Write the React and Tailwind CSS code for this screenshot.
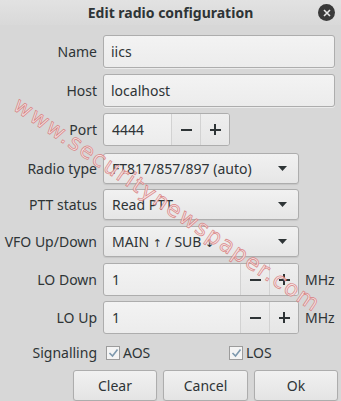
import React from "react";

const font = { fontFamily: '"Noto Sans", "DejaVu Sans", sans-serif' };

function Label({ children }) {
  return (
    <div className="w-[97px] shrink-0 text-right pr-[0px] text-[14px] text-[#2e3436] leading-none">
      {children}
    </div>
  );
}

function Entry({ value, className = "" }) {
  return (
    <div
      className={
        "h-[33px] flex items-center pl-[7px] rounded-[3px] border border-[#adadad] bg-gradient-to-b from-[#f3f3f3] to-[#ececec] shadow-[0_1px_0_rgba(255,255,255,0.5)] text-[14px] text-[#2e3436] " +
        className
      }
    >
      {value}
    </div>
  );
}

function Spin({ value, className = "" }) {
  return (
    <div
      className={
        "h-[33px] flex items-stretch rounded-[3px] border border-[#adadad] bg-gradient-to-b from-[#f3f3f3] to-[#ececec] text-[14px] text-[#2e3436] overflow-hidden " +
        className
      }
    >
      <div className="flex-1 flex items-center pl-[8px]">{value}</div>
      <div className="w-[29px] flex items-center justify-center border-l border-[#d2d2d2] bg-gradient-to-b from-[#eeeeee] to-[#e6e6e6]">
        <div className="w-[11px] h-[2px] bg-[#2e3436]" />
      </div>
      <div className="w-[29px] flex items-center justify-center border-l border-[#d2d2d2] bg-gradient-to-b from-[#eeeeee] to-[#e6e6e6] relative">
        <div className="w-[11px] h-[2px] bg-[#2e3436]" />
        <div className="absolute w-[2px] h-[11px] bg-[#2e3436]" />
      </div>
    </div>
  );
}

function Combo({ children }) {
  return (
    <div className="w-[196px] h-[31px] flex items-center justify-between pl-[8px] pr-[11px] rounded-[3px] border border-[#adadad] bg-gradient-to-b from-[#f1f1f1] to-[#e6e6e6] shadow-[0_1px_1px_rgba(0,0,0,0.08)] text-[14px] text-[#2e3436]">
      <span className="whitespace-nowrap">{children}</span>
      <svg width="9" height="5" viewBox="0 0 9 5">
        <path d="M0 0 L9 0 L4.5 5 Z" fill="#2e3436" />
      </svg>
    </div>
  );
}

function Check({ label }) {
  return (
    <div className="flex items-center">
      <div className="w-[14px] h-[14px] border border-[#9c9c9c] bg-[#f4f4f4] flex items-center justify-center">
        <svg width="11" height="10" viewBox="0 0 11 10">
          <path d="M1.5 5 L4.5 8 L9.5 1.5" fill="none" stroke="#7d98ad" strokeWidth="1.6" />
        </svg>
      </div>
      <span className="ml-[3px] text-[14px] text-[#2e3436] leading-none">{label}</span>
    </div>
  );
}

function Button({ children, className = "" }) {
  return (
    <div
      className={
        "h-[31px] flex items-center justify-center rounded-[3px] border border-[#adadad] bg-gradient-to-b from-[#f1f1f1] to-[#e4e4e4] shadow-[0_1px_1px_rgba(0,0,0,0.08)] text-[14px] text-[#2e3436] " +
        className
      }
    >
      {children}
    </div>
  );
}

export default function App() {
  return (
    <div
      className="relative w-[341px] h-[401px] overflow-hidden bg-[#d7d7d7]"
      style={font}
    >
      <div className="h-[25px] grid grid-cols-[1fr_auto_1fr] items-center bg-gradient-to-b from-[#e2e2e2] to-[#d9d9d9]">
        <div />
        <div className="text-[14px] font-bold text-[#2e3436] pl-[0px]">Edit radio configuration</div>
        <div className="flex justify-end pr-[6px]">
          <div className="w-[17px] h-[17px] rounded-full bg-[#3a3a3a] flex items-center justify-center">
            <svg width="8" height="8" viewBox="0 0 8 8">
              <path d="M1 1 L7 7 M7 1 L1 7" stroke="#e8e8e8" strokeWidth="1.6" />
            </svg>
          </div>
        </div>
      </div>

      <div className="flex flex-col mt-[10px]">
        <div className="flex items-center gap-[6px]">
          <Label>Name</Label>
          <Entry value="iics" className="w-[232px]" />
        </div>
        <div className="flex items-center gap-[6px] mt-[6px]">
          <Label>Host</Label>
          <Entry value="localhost" className="w-[232px]" />
        </div>
        <div className="flex items-center gap-[6px] mt-[6px]">
          <Label>Port</Label>
          <Spin value="4444" className="w-[127px]" />
        </div>
        <div className="flex items-center gap-[6px] mt-[7px]">
          <Label>Radio type</Label>
          <Combo>FT817/857/897 (auto)</Combo>
        </div>
        <div className="flex items-center gap-[6px] mt-[5px]">
          <Label>PTT status</Label>
          <Combo>Read PTT</Combo>
        </div>
        <div className="flex items-center gap-[6px] mt-[6px]">
          <Label>VFO Up/Down</Label>
          <Combo>
            MAIN <span className="text-[11px]">↑</span> / SUB <span className="text-[11px]">↓</span>
          </Combo>
        </div>
        <div className="flex items-center gap-[6px] mt-[6px]">
          <Label>LO Down</Label>
          <Spin value="1" className="w-[196px]" />
          <span className="text-[14px] text-[#2e3436]">MHz</span>
        </div>
        <div className="flex items-center gap-[6px] mt-[5px]">
          <Label>LO Up</Label>
          <Spin value="1" className="w-[196px]" />
          <span className="text-[14px] text-[#2e3436]">MHz</span>
        </div>
        <div className="flex items-center h-[20px] mt-[9px]">
          <Label>Signalling</Label>
          <div className="w-[132px] pl-[9px]">
            <Check label="AOS" />
          </div>
          <Check label="LOS" />
        </div>
        <div className="flex justify-end gap-[6px] pr-[3px] mt-[7px]">
          <Button className="w-[84px]">Clear</Button>
          <Button className="w-[85px]">Cancel</Button>
          <Button className="w-[84px]">Ok</Button>
        </div>
      </div>

      <div
        className="absolute left-[16px] top-[86px] origin-left rotate-[34deg] whitespace-nowrap pointer-events-none text-[22px] tracking-[1.8px] text-[#f7e2e2] opacity-90 [-webkit-text-stroke:0.7px_#d77a7a]"
        style={{ fontFamily: '"DejaVu Sans", sans-serif' }}
      >
        www.securitynewspaper.com
      </div>
    </div>
  );
}
